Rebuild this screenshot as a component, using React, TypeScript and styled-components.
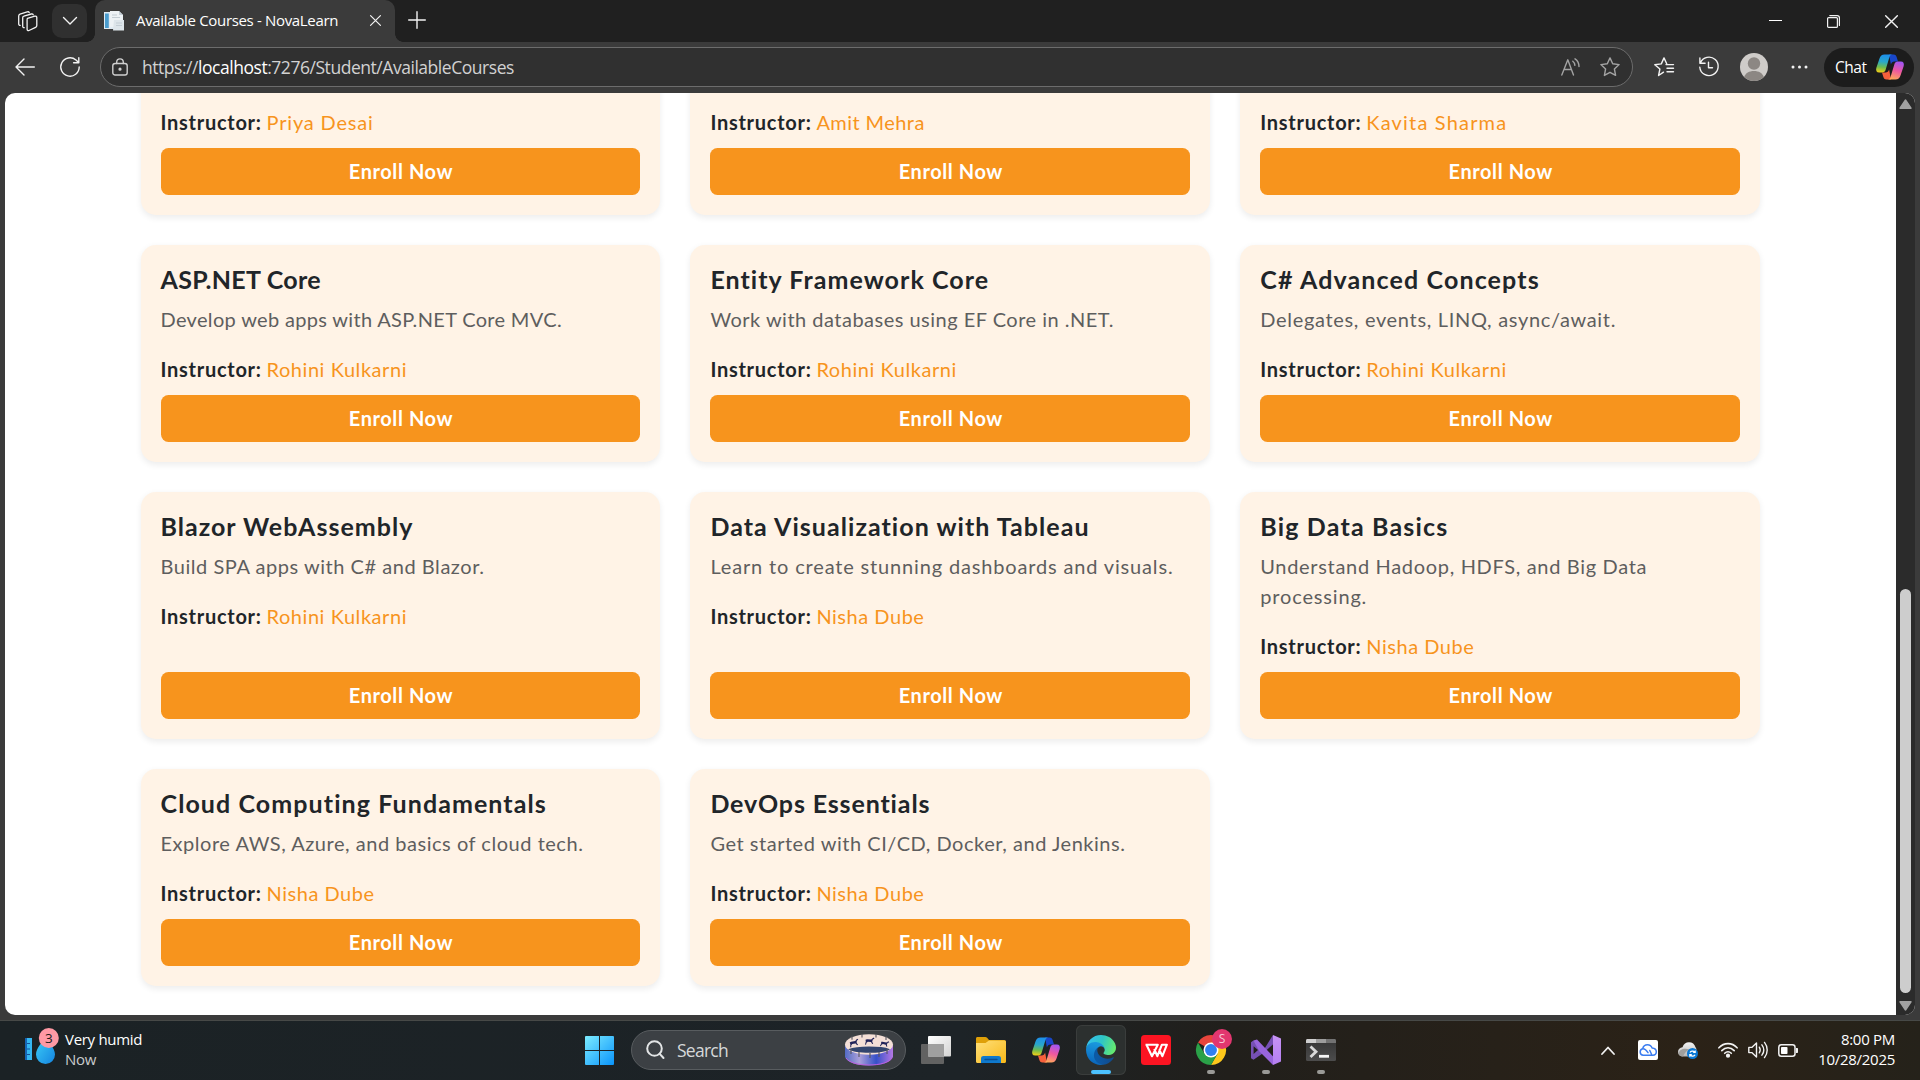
import React from 'react';
import styled, { createGlobalStyle, css } from 'styled-components';

const GlobalStyle = createGlobalStyle`
  *, *::before, *::after { box-sizing: border-box; }
  html, body { margin: 0; padding: 0; overflow: hidden; background: #3b3b3b; }
  svg { display: block; flex: none; overflow: visible; }
`;

const uiFont = css`font-family: "Open Sans", "Noto Sans", sans-serif;`;

const Screen = styled.div`
  width: 1920px;
  height: 1080px;
  display: grid;
  grid-template-rows: 42px 51px 922px 5px 60px;
  background: #3b3b3b;
  overflow: hidden;
`;

/* ---------- title bar ---------- */

const TitleBar = styled.header`
  display: flex;
  align-items: center;
  background: #202020;
  padding: 0 22px 0 17px;
`;

const TabSearchButton = styled.div`
  display: flex;
  align-items: center;
  justify-content: center;
  width: 35px;
  height: 34px;
  margin: 0 7px 0 13px;
  border-radius: 10px;
  background: #303030;
`;

const Tab = styled.div`
  position: relative;
  display: flex;
  align-items: center;
  width: 300px;
  height: 42px;
  padding: 0 14px 1px 9px;
  margin-left: 1px;
  border-radius: 10px 10px 0 0;
  background: #3b3b3b;

  &::before,
  &::after {
    content: '';
    position: absolute;
    bottom: 0;
    width: 8px;
    height: 8px;
  }
  &::before {
    left: -8px;
    background: radial-gradient(circle at 0 0, #202020 7.5px, #3b3b3b 8px);
  }
  &::after {
    right: -8px;
    background: radial-gradient(circle at 100% 0, #202020 7.5px, #3b3b3b 8px);
  }
`;

const TabTitle = styled.span`
  ${uiFont}
  flex: 1;
  margin: 0 0 2px 12px;
  font-size: 15px;
  line-height: 20px;
  letter-spacing: -0.33px;
  color: #fff;
  white-space: nowrap;
`;

const NewTab = styled.div`
  margin: 0 0 3px 13px;
`;

const WindowControls = styled.div`
  display: flex;
  align-items: center;
  gap: 45px;
  margin-left: auto;
`;

/* ---------- toolbar ---------- */

const Toolbar = styled.nav`
  display: flex;
  align-items: center;
  padding: 0 6px 1px 15px;
`;

const ReloadSlot = styled.div`
  margin: 0 20px 0 25px;
`;

const AddressBar = styled.div`
  display: flex;
  align-items: center;
  flex: 1;
  height: 40px;
  margin-right: 21px;
  padding: 0 12px 0 11px;
  border: 1px solid #6c6c6c;
  border-radius: 20px;
  background: #303030;
`;

const Url = styled.span`
  ${uiFont}
  flex: 1;
  margin-left: 14px;
  font-size: 17.5px;
  line-height: 24px;
  letter-spacing: -0.46px;
  color: #d2d2d2;

  b {
    font-weight: 400;
    color: #fff;
  }
`;

const AddressActions = styled.div`
  display: flex;
  align-items: center;
  gap: 20px;
`;

const ToolbarActions = styled.div`
  display: flex;
  align-items: center;
  gap: 21px;
`;

const ActionSlot = styled.div<{ $before: number }>`
  margin-left: ${p => p.$before}px;
`;

const ChatButton = styled.div`
  display: flex;
  align-items: center;
  justify-content: space-between;
  width: 90px;
  height: 39px;
  margin-left: -5px;
  padding: 0 10px 0 11px;
  border-radius: 20px;
  background: #1c1c1c;
`;

const ChatLabel = styled.span`
  ${uiFont}
  font-size: 15.5px;
  letter-spacing: -0.5px;
  color: #fff;
`;

/* ---------- page ---------- */

const Viewport = styled.div`
  display: flex;
  margin: 0 5px;
  border-radius: 10px;
  background: #fff;
  overflow: hidden;
`;

const Page = styled.main`
  flex: 1;
  display: flex;
  flex-direction: column;
  justify-content: flex-end;
  padding: 0 135.83px 29px 135.52px;
  overflow: hidden;
`;

const CourseGrid = styled.section`
  display: grid;
  grid-template-columns: repeat(3, 1fr);
  gap: 30px;
  flex: none;
`;

const Card = styled.article`
  display: flex;
  flex-direction: column;
  min-height: 217px;
  padding: 20px;
  border-radius: 15px;
  background: #fff3e6;
  box-shadow: 0 2.5px 6px rgba(0, 0, 0, 0.075);
  font-family: Lato, "Open Sans", sans-serif;
`;

const CourseTitle = styled.h5<{ $track: number }>`
  margin: 0 0 10px;
  font-size: 25px;
  font-weight: 700;
  line-height: 30px;
  letter-spacing: ${p => p.$track}px;
  color: #212529;
  white-space: nowrap;
`;

const Description = styled.p`
  margin: 0 0 20px;
  font-size: 20px;
  line-height: 30px;
  color: #5e5e5e;
`;

const DescriptionLine = styled.span<{ $track: number }>`
  display: block;
  letter-spacing: ${p => p.$track}px;
  white-space: nowrap;
`;

const Instructor = styled.p`
  display: flex;
  margin: 0;
  font-size: 20px;
  line-height: 30px;
  color: #212529;
`;

const InstructorLabel = styled.strong`
  width: 106px;
  font-weight: 700;
  letter-spacing: 0.73px;
`;

const InstructorName = styled.span<{ $track: number }>`
  letter-spacing: ${p => p.$track}px;
  color: #f7941d;
`;

const CardBody = styled.div`
  display: flex;
  flex: 1;
  flex-direction: column;
  margin: -1px 0 11px;
`;

const PinnedBody = styled(CardBody)`
  justify-content: flex-end;
`;

const EnrollButton = styled.button`
  height: 47px;
  padding: 0 0 2px 1px;
  border: 0;
  border-radius: 7.5px;
  background: #f7941d;
  font: 700 20px/30px Lato, "Open Sans", sans-serif;
  letter-spacing: 0.58px;
  color: #fff;
`;

const Scrollbar = styled.div`
  display: flex;
  flex-direction: column;
  align-items: center;
  width: 19px;
  padding: 6px 0 4px 0;
  background: #2b2b2b;
`;

const Thumb = styled.div`
  width: 11px;
  height: 404px;
  margin: auto 0 8px;
  border-radius: 6px;
  background: #cdcdcd;
`;

/* ---------- taskbar ---------- */

const Taskbar = styled.footer`
  grid-row: 5;
  display: grid;
  grid-template-columns: 574px 1fr 319px;
  border-top: 1px solid #474947;
  background: linear-gradient(90deg, #1b2225 0%, #1d2327 50%, #211f1b 64%, #272119 78%, #2b2217 88%, #25221a 100%);
`;

const Weather = styled.div`
  display: flex;
  align-items: flex-start;
  padding: 6px 0 0 25px;
`;

const WeatherText = styled.div`
  ${uiFont}
  display: flex;
  flex-direction: column;
  margin: 2px 0 0 5px;
  font-size: 15px;
  line-height: 20px;
  letter-spacing: -0.3px;
  color: #fff;
`;

const Muted = styled.span`
  color: #c9cbcc;
`;

const Dock = styled.div`
  display: flex;
  align-items: flex-start;
  padding-top: 4px;
  gap: 5px;
`;

const Tile = styled.div<{ $active?: boolean }>`
  position: relative;
  display: flex;
  align-items: center;
  justify-content: center;
  width: 50px;
  height: 50px;
  border-radius: 6px;
  ${p => p.$active && css`
    background: #2c302f;
    box-shadow: inset 0 0 0 1px #3a3d3c;
  `}
`;

const Indicator = styled.i<{ $active?: boolean }>`
  position: absolute;
  left: 50%;
  bottom: 1px;
  width: ${p => (p.$active ? 20 : 8)}px;
  height: 4px;
  border-radius: 2px;
  transform: translateX(-50%);
  background: ${p => (p.$active ? '#4cc2ff' : '#9a9a97')};
`;

const Badge = styled.span`
  ${uiFont}
  position: absolute;
  right: 4px;
  top: 4px;
  width: 20px;
  height: 20px;
  border-radius: 50%;
  background: #e2366f;
  font-size: 12px;
  line-height: 20px;
  text-align: center;
  color: #f9c9d8;
`;

const SearchBox = styled.div`
  display: flex;
  align-items: center;
  width: 275px;
  height: 40px;
  margin: 5px 0 0 2px;
  padding: 0 12px 0 14px;
  border: 1px solid #585c5f;
  border-radius: 20px;
  background: #3c4044;
`;

const SearchLabel = styled.span`
  ${uiFont}
  flex: 1;
  margin-left: 11px;
  font-size: 17.5px;
  letter-spacing: -0.74px;
  color: #d6d8d9;
`;

const Tray = styled.div`
  display: flex;
  align-items: center;
  padding: 0 25px 1px 0;
`;

const TrayIcon = styled.div<{ $gap: number }>`
  margin-right: ${p => p.$gap}px;
`;

const Clock = styled.div`
  ${uiFont}
  flex: 1;
  margin-bottom: 2px;
  font-size: 15px;
  line-height: 20px;
  letter-spacing: -0.28px;
  text-align: right;
  color: #fff;
`;

/* ---------- data ---------- */

type Tracked = [text: string, track: number];
interface Course {
  title?: Tracked;
  lines?: Tracked[];
  by: Tracked;
}

const rohini: Tracked = ['Rohini Kulkarni', 0.55];
const nisha: Tracked = ['Nisha Dube', 0.53];

const courses: Course[] = [
  { by: ['Priya Desai', 0.82] },
  { by: ['Amit Mehra', 0.43] },
  { by: ['Kavita Sharma', 1.18] },
  { title: ['ASP.NET Core', 0.27], lines: [['Develop web apps with ASP.NET Core MVC.', 0.33]], by: rohini },
  { title: ['Entity Framework Core', 1.05], lines: [['Work with databases using EF Core in .NET.', 0.49]], by: rohini },
  { title: ['C# Advanced Concepts', 1.13], lines: [['Delegates, events, LINQ, async/await.', 0.68]], by: rohini },
  { title: ['Blazor WebAssembly', 1.01], lines: [['Build SPA apps with C# and Blazor.', 0.54]], by: rohini },
  { title: ['Data Visualization with Tableau', 1.05], lines: [['Learn to create stunning dashboards and visuals.', 0.84]], by: nisha },
  { title: ['Big Data Basics', 1.18], lines: [['Understand Hadoop, HDFS, and Big Data', 0.68], ['processing.', 0.83]], by: nisha },
  { title: ['Cloud Computing Fundamentals', 1.08], lines: [['Explore AWS, Azure, and basics of cloud tech.', 0.53]], by: nisha },
  { title: ['DevOps Essentials', 0.86], lines: [['Get started with CI/CD, Docker, and Jenkins.', 0.53]], by: nisha },
];

function CourseCard({ title, lines, by }: Course) {
  const Body = title ? CardBody : PinnedBody;
  return (
    <Card>
      <Body>
        {title && <CourseTitle $track={title[1]}>{title[0]}</CourseTitle>}
        {lines && (
          <Description>
            {lines.map(([text, track]) => <DescriptionLine key={text} $track={track}>{text}</DescriptionLine>)}
          </Description>
        )}
        <Instructor>
          <InstructorLabel>Instructor:</InstructorLabel>
          <InstructorName $track={by[1]}>{by[0]}</InstructorName>
        </Instructor>
      </Body>
      <EnrollButton>Enroll Now</EnrollButton>
    </Card>
  );
}

/* ---------- icons ---------- */

const line = { fill: 'none', stroke: '#f2f2f2', strokeWidth: 1.4, strokeLinecap: 'round', strokeLinejoin: 'round' } as const;
const dim = { ...line, stroke: '#a3a3a3' };

const WorkspacesIcon = () => (
  <svg width="22" height="22" viewBox="0 0 22 22" {...line} strokeWidth={1.3}>
    <path d="M10.5 8.300 17.800 6.200c1.200-.3 2 .3 2 1.400v8c0 .8-.4 1.400-1.200 1.700l-6.600 3.200c-1 .4-1.900-.2-1.900-1.200V9.700c0-.7.1-1.200.4-1.400Z" />
    <path d="M7.200 17.700c-.9.1-1.500-.5-1.500-1.400V7.800c0-.9.400-1.500 1.200-1.700l7.400-2.100c.9-.2 1.600.1 1.900.8" />
    <path d="M3.200 15.400c-.9.1-1.500-.5-1.500-1.400V6c0-.9.5-1.500 1.300-1.800l7.200-2.300c.9-.3 1.700 0 2 .7" />
  </svg>
);

const ChevronDown = () => (
  <svg width="16" height="10" viewBox="0 0 16 10" {...line}><path d="m1.500 1.500 6.500 6.500 6.500-6.500" /></svg>
);

const PageIcon = () => (
  <svg width="20" height="20" viewBox="0 0 20 20">
    <path d="M0 1h10v17H0z" fill="#dfeaf2" />
    <path d="M1 2.500h3.800V17H1z" fill="#4a9ccd" />
    <path d="M6 0h9l4 4v12H6z" fill="#edf2f5" />
    <path d="M15 0v4h4" fill="#c6d0d7" />
    <path d="M10 9h10v10.500H9z" fill="#dde5ea" />
    <path d="M8 4h5M8 6.500h8M12 12h6M12 14.500h6" stroke="#c3cdd4" fill="none" />
  </svg>
);

const CrossIcon = ({ size }: { size: number }) => (
  <svg width={size} height={size} viewBox="0 0 12 12" {...line} strokeWidth={1.300}><path d="m.6.6 10.800 10.800M11.400.6.6 11.400" /></svg>
);

const PlusIcon = () => (
  <svg width="18" height="18" viewBox="0 0 18 18" {...line}><path d="M9 .7v16.600M.7 9h16.600" /></svg>
);

const MinimizeIcon = () => (
  <svg width="13" height="13" viewBox="0 0 13 13"><path d="M0 5.500h13" stroke="#fff" /></svg>
);

const RestoreIcon = () => (
  <svg width="13" height="13" viewBox="0 0 13 13" {...line} strokeWidth={1.2}>
    <rect x=".6" y="2.600" width="9.800" height="9.800" rx="1" />
    <path d="M2.800.6h7.400c1.300 0 2.200.9 2.200 2.200v7.600" />
  </svg>
);

const BackIcon = () => (
  <svg width="20" height="18" viewBox="0 0 20 18" {...line}><path d="M19.300 9H1M9 1 1 9l8 8" /></svg>
);

const ReloadIcon = () => (
  <svg width="20" height="20" viewBox="0 0 20 20" {...line}><path d="M19.200 10A9.200 9.200 0 1 1 16 3l2.600 2.500M18.800.8v5h-5.200" /></svg>
);

const LockIcon = () => (
  <svg width="16" height="18" viewBox="0 0 16 18" {...line} stroke="#d0d0d0">
    <rect x=".8" y="5.500" width="14.400" height="11.500" rx="2.300" />
    <path d="M4.700 5.500V4.200a3.300 3.300 0 0 1 6.600 0v1.300" />
    <circle cx="8" cy="11.200" r=".9" fill="#d0d0d0" />
  </svg>
);

const ReadAloudIcon = () => (
  <svg width="19" height="18" viewBox="0 0 19 18" {...dim}>
    <path d="m.8 17 6-15.200 5.700 15.200M3 11.500h7.400M11.800 3.200c1.300 1 2 2.400 2.100 4.200M14 .8c2.600 1.700 4 4.300 4 7.700" />
  </svg>
);

const starPath = 'm10 .9 2.700 5.900 6.400.8-4.700 4.400 1.200 6.400L10 15.300l-5.600 3.100L5.600 12 .9 7.600l6.400-.8Z';
const StarIcon = () => <svg width="20" height="20" viewBox="0 0 20 20" {...dim}><path d={starPath} /></svg>;

const FavoritesIcon = () => (
  <svg width="20" height="20" viewBox="0 0 20 20" {...line}>
    <path d="M9.500 15.200 4.600 18.500 5.900 12 .8 7.700l6.500-.8L10 .9l2.700 5.900M12 7.600h7.500M13 11.200h6.500M13 14.800h6.500" />
  </svg>
);

const HistoryIcon = () => (
  <svg width="20" height="20" viewBox="0 0 20 20" {...line}>
    <path d="M.9 1v5.200h5.200M1.400 6a9.200 9.200 0 1 1-.6 4.200M9.500 5.200v5.600h4" />
  </svg>
);

const AvatarIcon = () => (
  <svg width="28" height="28" viewBox="0 0 28 28">
    <circle cx="14" cy="14" r="14" fill="#cfccc9" />
    <circle cx="14" cy="10.500" r="6.200" fill="#8c8783" />
    <path d="M4.200 24c1.300-4 5-6 9.800-6s8.500 2 9.800 6A14 14 0 0 1 14 28a14 14 0 0 1-9.800-4Z" fill="#8c8783" />
  </svg>
);

const DotsIcon = () => (
  <svg width="17" height="4" viewBox="0 0 17 4" fill="#f2f2f2">
    <circle cx="2" cy="2" r="1.500" /><circle cx="8.500" cy="2" r="1.500" /><circle cx="15" cy="2" r="1.500" />
  </svg>
);

const CopilotIcon = ({ id }: { id: string }) => (
  <svg width="28" height="26" viewBox="0 0 28 26">
    <defs>
      <linearGradient id={id + 'a'} x1=".4" y1="0" x2=".3" y2="1">
        <stop offset="0" stopColor="#1c8fec" /><stop offset=".4" stopColor="#2aa7c9" /><stop offset=".7" stopColor="#6dbb50" /><stop offset="1" stopColor="#f3cf16" />
      </linearGradient>
      <linearGradient id={id + 'b'} x1=".7" y1="0" x2=".4" y2="1">
        <stop offset="0" stopColor="#a055f5" /><stop offset=".5" stopColor="#ee57a0" /><stop offset="1" stopColor="#ffa65c" />
      </linearGradient>
    </defs>
    <path d="M13 .5h4.500c2 0 2.700 1 3.300 3l1.200 4h-3.500c-2 0-3 1-3.600 3Z" fill="#1846c9" />
    <path d="M15 25.500h-4.500c-2 0-2.700-1-3.300-3L6 18.500h3.500c2 0 3-1 3.600-3Z" fill="#f6603c" />
    <path d="M8.500.5h8c-1.700 0-2.600 1-3.200 3l-3.600 12c-.7 2.200-1.600 3-3.700 3H3.200C.5 18.500-.3 16.500.3 14L3.500 4.500c.9-2.800 2.300-4 5-4Z" fill={`url(#${id}a)`} />
    <path d="M19.500 25.500h-8c1.700 0 2.600-1 3.200-3l3.600-12c.7-2.200 1.600-3 3.700-3h2.800c2.700 0 3.500 2 2.900 4.500l-3.200 9.500c-.9 2.800-2.300 4-5 4Z" fill={`url(#${id}b)`} />
  </svg>
);

const ScrollArrow = ({ down }: { down?: boolean }) => (
  <svg width="13" height="10" viewBox="0 0 13 10">
    <path d={down ? 'M1 .8h11L6.500 9Z' : 'M1 9.200h11L6.500 1Z'} fill="#a1a1a1" stroke="#a1a1a1" strokeWidth="1.400" strokeLinejoin="round" />
  </svg>
);

const HumidityIcon = () => (
  <svg width="35" height="38" viewBox="0 0 35 38">
    <defs>
      <linearGradient id="drop" x1="0" y1="0" x2="1" y2="1"><stop stopColor="#3dd0f8" /><stop offset="1" stopColor="#1484e0" /></linearGradient>
    </defs>
    <path d="M0 11h7v22H0z" fill="#35b7f2" /><path d="M0 11h2v22H0z" fill="#1665b5" />
    <path d="M2 16.500h3M2 22h3M2 27.500h3" stroke="#14539b" strokeWidth="1.200" />
    <path d="M20.500 9c2 5 9.500 12 9.500 18.500a9.500 9.500 0 0 1-19 0C11 21 18.500 14 20.500 9Z" fill="url(#drop)" />
    <circle cx="23.800" cy="11" r="10" fill="#ff99a4" />
    <text x="23.800" y="16" textAnchor="middle" fontFamily="Open Sans, sans-serif" fontSize="13.500" fill="#1b1b1b">3</text>
  </svg>
);

const WindowsIcon = () => (
  <svg width="29" height="29" viewBox="0 0 29 29">
    <defs>
      <linearGradient id="win" x1="0" y1="0" x2="1" y2="1"><stop stopColor="#7cecff" /><stop offset="1" stopColor="#0a94fb" /></linearGradient>
    </defs>
    <path d="M1 0h13v14H0V1a1 1 0 0 1 1-1ZM15 0h13a1 1 0 0 1 1 1v13H15ZM0 15h14v14H1a1 1 0 0 1-1-1ZM15 15h14v13a1 1 0 0 1-1 1H15Z" fill="url(#win)" />
  </svg>
);

const SearchIcon = () => (
  <svg width="20" height="20" viewBox="0 0 20 20" fill="none" stroke="#e3e5e6" strokeWidth="2" strokeLinecap="round">
    <circle cx="8.500" cy="8.500" r="7.300" /><path d="m13.700 13.800 3.800 4.200" />
  </svg>
);

const horse = 'm-4 3 .8-3-.3-1.800L-2-2.200l4.200.2L4.500-4l1 1.200-1.700.8-.6 2.200 1 2-1 .3-1.200-2-3.200-.3-1.300 1-.5 2Z';
const ZoetropeArt = () => (
  <svg width="48" height="32" viewBox="0 0 48 32">
    <defs>
      <linearGradient id="drumOuter" x1="0" x2="1"><stop stopColor="#536bc4" /><stop offset=".3" stopColor="#aba0da" /><stop offset=".65" stopColor="#3650c9" /><stop offset="1" stopColor="#b478e4" /></linearGradient>
    </defs>
    <path d="M0 11v12c2 5 11 8.500 24 8.500S46 28 48 23V11Z" fill="url(#drumOuter)" />
    <path d="M1 24c3 4.500 12 7 23 7s20-2.500 23-7" fill="none" stroke="#bd5edc" strokeWidth="1" />
    <ellipse cx="24" cy="10.500" rx="24" ry="10.300" fill="#f4dfd7" />
    <path d="M3 15.300C8 13.400 15 12.600 24 12.600s16 .6 21 2.600c-4 2.600-12 3.600-21 3.600s-17-1-21-3.500Z" fill="#33456f" />
    <path d="M7 1.800v4M17 0v3.500M31 0v3.500M41 2v4M6 15v5M14 18v5M25 19v5M34 18v5M42 15v5" stroke="#57565f" strokeWidth="1.100" />
    <g fill="#222359">
      <path d={horse} transform="translate(8.500 9.500) rotate(-12)" />
      <path d={horse} transform="translate(24 7.500)" />
      <path d={horse} transform="translate(39 10) rotate(10) scale(.9)" />
    </g>
  </svg>
);

const TaskViewIcon = () => (
  <svg width="30" height="28" viewBox="0 0 30 28">
    <defs>
      <linearGradient id="tv" x1="0" y1="0" x2="1" y2="1"><stop stopColor="#fff" /><stop offset="1" stopColor="#d3d3d3" /></linearGradient>
    </defs>
    <rect y="8" width="23" height="20" rx="1" fill="#626262" />
    <rect x="7" width="23" height="20.500" rx="1" fill="url(#tv)" />
    <path d="M7 8h16v12.500H7z" fill="#a0a0a0" />
  </svg>
);

const FolderIcon = () => (
  <svg width="30" height="26" viewBox="0 0 30 26">
    <defs>
      <linearGradient id="fold" x1="0" y1="0" x2="1" y2="1"><stop stopColor="#ffe07a" /><stop offset="1" stopColor="#f8b818" /></linearGradient>
    </defs>
    <path d="M0 1.500C0 .6.600 0 1.500 0h7.800c.8 0 1.300.3 1.800.8L13 3h15c1.200 0 2 .8 2 2v6H0Z" fill="#dfa008" />
    <path d="M0 6h9.500l3.500-2.500h15.500c.9 0 1.500.6 1.500 1.500v19.500c0 .9-.6 1.500-1.500 1.500h-27C.6 26 0 25.400 0 24.500Z" fill="url(#fold)" />
    <path d="M5 26v-4.500C5 19.800 6 19 7.500 19h15c1.500 0 2.500.8 2.500 2.500V26Z" fill="#0f79cd" />
    <path d="M9 22.500h12" stroke="#0a4f93" strokeWidth="1.400" strokeLinecap="round" />
  </svg>
);

const EdgeIcon = () => (
  <svg width="30" height="30" viewBox="0 0 256 256">
    <defs>
      <linearGradient id="e1" x1=".25" y1=".6" x2=".95" y2=".6"><stop stopColor="#0c59a4" /><stop offset="1" stopColor="#114a8b" /></linearGradient>
      <linearGradient id="e2" x1=".6" y1="0" x2=".4" y2="1"><stop stopColor="#1b9de2" /><stop offset=".5" stopColor="#1382cf" /><stop offset="1" stopColor="#0a63b8" /></linearGradient>
      <linearGradient id="e3" x1="0" y1=".3" x2="1" y2=".55"><stop stopColor="#35c1f1" /><stop offset=".5" stopColor="#2fc5c5" /><stop offset="1" stopColor="#66eb6e" /></linearGradient>
    </defs>
    <path d="M231 190.500a94 94 0 0 1-10.500 4.700 101.900 101.900 0 0 1-35.900 6.500c-47.300 0-88.500-32.600-88.500-74.300a31.500 31.500 0 0 1 16.400-27.300c-42.800 1.800-53.800 46.400-53.800 72.500 0 74 68.100 81.400 82.800 81.400 7.900 0 19.800-2.300 27-4.600l1.300-.4a128.300 128.300 0 0 0 66.600-52.800 4 4 0 0 0-5.400-5.700Z" fill="url(#e1)" />
    <path d="M105.700 241.400a79.200 79.200 0 0 1-22.700-21.300 80.700 80.700 0 0 1 29.500-120c3.200-1.500 8.500-4.100 15.600-4a32.400 32.400 0 0 1 25.700 13 31.900 31.900 0 0 1 6.300 18.700c0-.2 24.500-79.600-80-79.600-43.900 0-80 41.600-80 78.200a130.200 130.200 0 0 0 12.100 56 128 128 0 0 0 156.400 67.100 75.500 75.500 0 0 1-62.800-8Z" fill="url(#e2)" />
    <path d="M152.300 148.900c-.9 1-3.400 2.500-3.400 5.600 0 2.600 1.700 5.200 4.800 7.300 14.300 10 41.400 8.600 41.500 8.600a59.600 59.600 0 0 0 30.300-8.300 61.400 61.400 0 0 0 30.400-52.900c.3-22.400-8-37.300-11.300-43.900C223.500 23.900 177.700 0 128 0A128 128 0 0 0 0 126.200c.5-36.500 36.800-66 80-66 3.500 0 23.500.3 42 10.100 16.300 8.600 24.900 18.900 30.800 29.200 6.200 10.700 7.300 24.100 7.300 29.500 0 5.300-2.700 13.300-7.800 19.900Z" fill="url(#e3)" />
  </svg>
);

const WpsIcon = () => (
  <svg width="30" height="30" viewBox="0 0 30 30">
    <rect width="30" height="30" rx="3.500" fill="#fc1422" />
    <path d="M4.500 9.700h12.300l-5.800 11.500-5.300-11M13.200 14l3.200 7.200 4.500-11.500h5l-4.500 11.500-3.300-7" fill="none" stroke="#fff" strokeWidth="2.100" strokeLinejoin="round" />
  </svg>
);

const ChromeIcon = () => (
  <svg width="30" height="30" viewBox="0 0 48 48">
    <path d="M24 24 3.200 12A24 24 0 0 1 44.800 12Z" fill="#e8453c" />
    <path d="M24 12h20.800A24 24 0 0 1 24 48l10.400-18Z" fill="#fdc81b" />
    <path d="M3.200 12A24 24 0 0 0 24 48l10.400-18L24 24l-10.400 6Z" fill="#2aa148" />
    <circle cx="24" cy="24" r="12" fill="#fff" /><circle cx="24" cy="24" r="9.500" fill="#3080f0" />
  </svg>
);

const VisualStudioIcon = () => (
  <svg width="30" height="30" viewBox="0 0 30 30">
    <defs>
      <linearGradient id="vs" x1="0" y1="0" x2="0" y2="1"><stop stopColor="#c793f5" /><stop offset="1" stopColor="#b47ff0" /></linearGradient>
    </defs>
    <path d="M0 7.200 2.400 5.500 13 14.500 22 0l1 8.500L12 18.200 2.500 24.800 0 23.200Zm2.600 4v7.800L7 15Z" fill="#7650b5" fillRule="evenodd" />
    <path d="M2.400 5.500 6 4.500 22.200 21.500 22 30 8.500 16.500Z" fill="#9865dc" />
    <path d="M22 0l8 3.500v23L22 30Z" fill="url(#vs)" />
  </svg>
);

const TerminalIcon = () => (
  <svg width="30" height="22" viewBox="0 0 30 22">
    <defs>
      <linearGradient id="term" x1="0" y1="0" x2="0" y2="1"><stop stopColor="#343434" /><stop offset="1" stopColor="#4c4c4c" /></linearGradient>
    </defs>
    <rect width="30" height="22" rx="1.500" fill="url(#term)" />
    <path d="M1.500 0H10v4H0V1.500C0 .6.600 0 1.500 0Z" fill="#cfcfcf" /><path d="M10 0h10v4H10z" fill="#9c9c9c" /><path d="M20 0h8.500c.9 0 1.500.6 1.500 1.500V4H20Z" fill="#727272" />
    <path d="m4.500 7.500 5.500 5.200-5.500 5.300" fill="none" stroke="#d8d8d8" strokeWidth="2.800" /><path d="M13 17.300h10" stroke="#f4f4f4" strokeWidth="2.800" />
  </svg>
);

const ChevronUp = () => (
  <svg width="14" height="9" viewBox="0 0 14 9" {...line} strokeWidth={1.800}><path d="m1 8 6-6.500L13 8" /></svg>
);

const CloudTileIcon = () => (
  <svg width="20" height="20" viewBox="0 0 20 20">
    <rect width="20" height="20" rx="2" fill="#fff" />
    <path d="M11.800 10.500 14 15.200H5.200a3.300 3.300 0 0 1-.5-6.500C5.200 6.300 7.200 4.700 9.500 4.700c2.200 0 3.900 1.300 4.600 3.300 2.500.2 4.200 1.700 4.200 3.800 0 1.900-1.500 3.400-3.500 3.400M4.700 8.800c2.400-.4 3.800 1.700 5.300 3.800" fill="none" stroke="#3a7cf0" strokeWidth="1.500" strokeLinecap="round" strokeLinejoin="round" />
  </svg>
);

const OneDriveIcon = () => (
  <svg width="20" height="17" viewBox="0 0 20 17">
    <defs>
      <linearGradient id="od" x1="0" y1="0" x2="0" y2="1"><stop stopColor="#f4f4f4" /><stop offset="1" stopColor="#b5b5b5" /></linearGradient>
    </defs>
    <path d="M5 14.500c-3 0-5-1.900-5-4.500 0-2.700 2-4.600 4.500-4.700C5.500 2.100 8 .3 11 .3c3.200 0 5.700 1.900 6.500 5 1.600.9 1.500 9.200-2 9.200Z" fill="url(#od)" />
    <path d="M.5 12C1 7 7 5.500 11 7.500 8 9 6 12 5 14.500 2.800 14.500 1.200 13.500.5 12Z" fill="#a09f9d" />
    <circle cx="14.500" cy="11.500" r="5.500" fill="#0a78d4" />
    <path d="M12 10.500c.6-1.600 3.500-2 4.700-.4M17.200 8.500v2h-2M17 12.700c-.6 1.600-3.500 2-4.700.4M11.800 14.700v-2h2" fill="none" stroke="#fff" strokeWidth="1.200" />
  </svg>
);

const WifiIcon = () => (
  <svg width="20" height="16" viewBox="0 0 20 16" {...line} strokeWidth={1.600}>
    <path d="M.9 5.800C6 .2 14 .2 19.100 5.800M3.800 8.600c3.600-3.800 8.800-3.800 12.400 0M6.700 11.300c2-2 4.600-2 6.600 0" />
    <circle cx="10" cy="13.700" r="1.300" fill="#fff" />
  </svg>
);

const SpeakerIcon = () => (
  <svg width="20" height="18" viewBox="0 0 20 18" {...line}>
    <path d="M.8 6.400h3L8.500 2v14l-4.700-4.400h-3ZM11.300 6.200c1.100 1.700 1.100 3.900 0 5.600M13.900 3.800c2.300 3.100 2.300 7.300 0 10.400M16.500 1.400c3.600 4.500 3.600 10.700 0 15.200" />
  </svg>
);

const BatteryIcon = () => (
  <svg width="20" height="13" viewBox="0 0 20 13" fill="none">
    <rect x=".8" y=".8" width="16.200" height="11.400" rx="2.500" stroke="#f2f2f2" strokeWidth="1.500" />
    <rect x="3" y="3" width="6.500" height="7" rx=".8" fill="#fff" /><path d="M18 4h1c.6 0 1 .4 1 1v3c0 .6-.4 1-1 1h-1Z" fill="#f2f2f2" />
  </svg>
);

/* ---------- app ---------- */

export default function App() {
  return (
    <Screen>
      <GlobalStyle />
      <TitleBar>
        <WorkspacesIcon />
        <TabSearchButton><ChevronDown /></TabSearchButton>
        <Tab>
          <PageIcon />
          <TabTitle>Available Courses - NovaLearn</TabTitle>
          <CrossIcon size={11} />
        </Tab>
        <NewTab><PlusIcon /></NewTab>
        <WindowControls><MinimizeIcon /><RestoreIcon /><CrossIcon size={13} /></WindowControls>
      </TitleBar>

      <Toolbar>
        <BackIcon />
        <ReloadSlot><ReloadIcon /></ReloadSlot>
        <AddressBar>
          <LockIcon />
          <Url>https://<b>localhost</b>:7276/Student/AvailableCourses</Url>
          <AddressActions><ReadAloudIcon /><StarIcon /></AddressActions>
        </AddressBar>
        <ToolbarActions>
          <FavoritesIcon />
          <ActionSlot $before={4}><HistoryIcon /></ActionSlot>
          <AvatarIcon />
          <ActionSlot $before={2}><DotsIcon /></ActionSlot>
          <ChatButton><ChatLabel>Chat</ChatLabel><CopilotIcon id="chat" /></ChatButton>
        </ToolbarActions>
      </Toolbar>

      <Viewport>
        <Page>
          <CourseGrid>
            {courses.map((course, i) => <CourseCard key={i} {...course} />)}
          </CourseGrid>
        </Page>
        <Scrollbar><ScrollArrow /><Thumb /><ScrollArrow down /></Scrollbar>
      </Viewport>

      <Taskbar>
        <Weather>
          <HumidityIcon />
          <WeatherText><span>Very humid</span><Muted>Now</Muted></WeatherText>
        </Weather>
        <Dock>
          <Tile><WindowsIcon /></Tile>
          <SearchBox><SearchIcon /><SearchLabel>Search</SearchLabel><ZoetropeArt /></SearchBox>
          <Tile><TaskViewIcon /></Tile>
          <Tile><FolderIcon /></Tile>
          <Tile><CopilotIcon id="dock" /></Tile>
          <Tile $active><EdgeIcon /><Indicator $active /></Tile>
          <Tile><WpsIcon /></Tile>
          <Tile><ChromeIcon /><Badge>S</Badge><Indicator /></Tile>
          <Tile><VisualStudioIcon /><Indicator /></Tile>
          <Tile><TerminalIcon /><Indicator /></Tile>
        </Dock>
        <Tray>
          <TrayIcon $gap={23}><ChevronUp /></TrayIcon>
          <TrayIcon $gap={20}><CloudTileIcon /></TrayIcon>
          <TrayIcon $gap={20}><OneDriveIcon /></TrayIcon>
          <TrayIcon $gap={10}><WifiIcon /></TrayIcon>
          <TrayIcon $gap={10}><SpeakerIcon /></TrayIcon>
          <BatteryIcon />
          <Clock>8:00 PM<br />10/28/2025</Clock>
        </Tray>
      </Taskbar>
    </Screen>
  );
}
